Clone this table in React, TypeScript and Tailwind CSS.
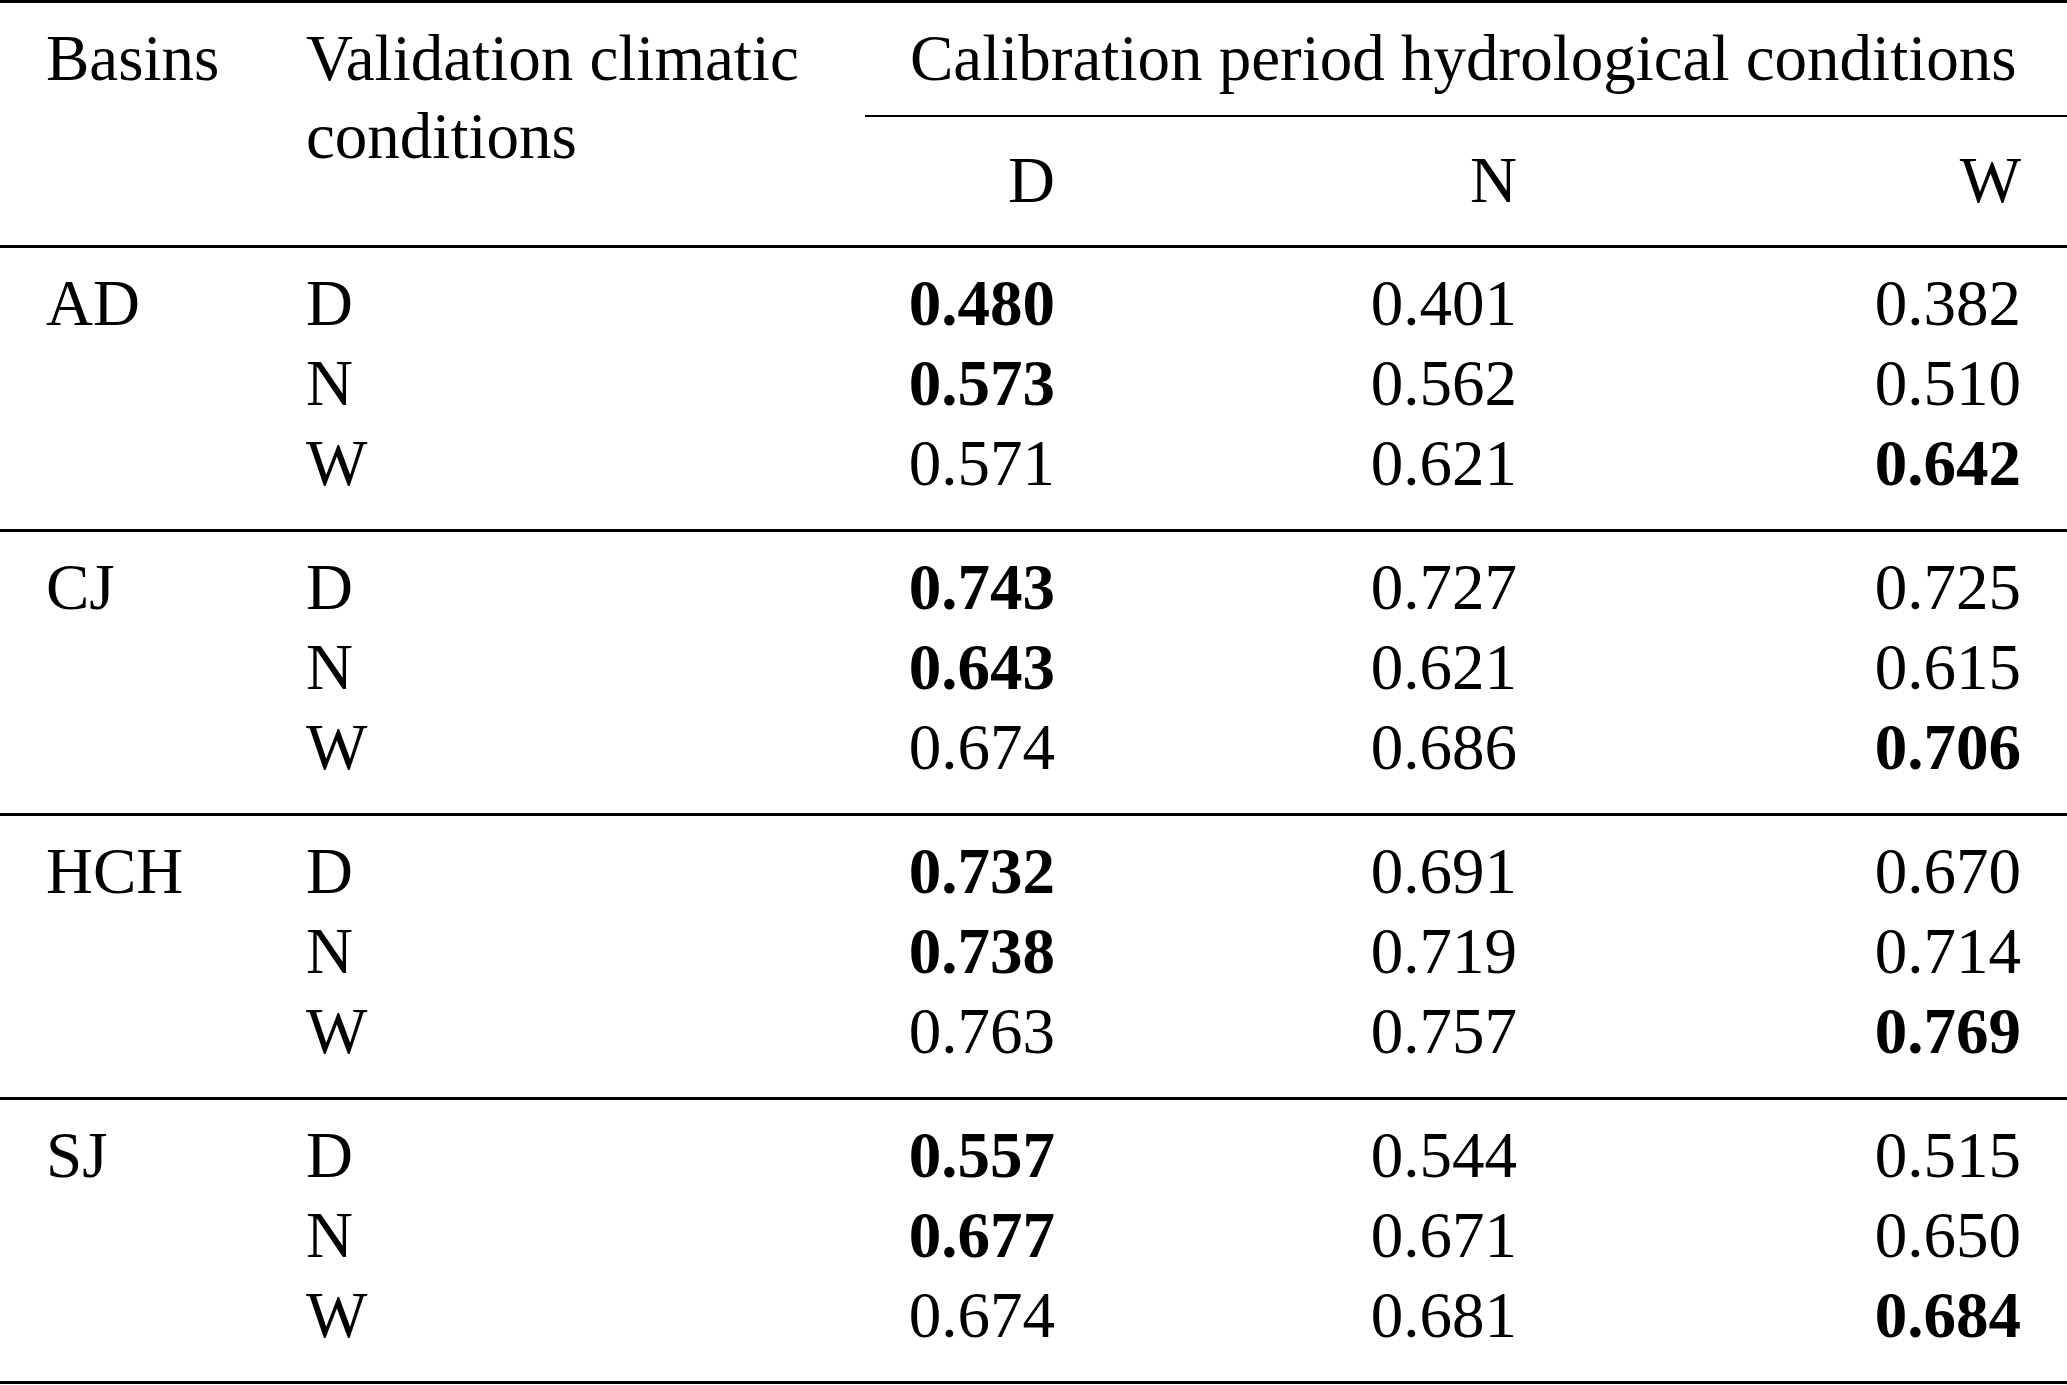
type Row = { cond: string; values: [string, string, string]; best: number }

type Group = { basin: string; rows: Row[] }

const GROUPS: Group[] = [
  {
    basin: "AD",
    rows: [
      { cond: "D", values: ["0.480", "0.401", "0.382"], best: 0 },
      { cond: "N", values: ["0.573", "0.562", "0.510"], best: 0 },
      { cond: "W", values: ["0.571", "0.621", "0.642"], best: 2 },
    ],
  },
  {
    basin: "CJ",
    rows: [
      { cond: "D", values: ["0.743", "0.727", "0.725"], best: 0 },
      { cond: "N", values: ["0.643", "0.621", "0.615"], best: 0 },
      { cond: "W", values: ["0.674", "0.686", "0.706"], best: 2 },
    ],
  },
  {
    basin: "HCH",
    rows: [
      { cond: "D", values: ["0.732", "0.691", "0.670"], best: 0 },
      { cond: "N", values: ["0.738", "0.719", "0.714"], best: 0 },
      { cond: "W", values: ["0.763", "0.757", "0.769"], best: 2 },
    ],
  },
  {
    basin: "SJ",
    rows: [
      { cond: "D", values: ["0.557", "0.544", "0.515"], best: 0 },
      { cond: "N", values: ["0.677", "0.671", "0.650"], best: 0 },
      { cond: "W", values: ["0.674", "0.681", "0.684"], best: 2 },
    ],
  },
]

function Header() {
  return (
    <div className="grid grid-cols-[260px_559px_1156px] px-[46px] pt-[16px] pb-[26px] border-b-[3px] border-black leading-[78px]">
      <div>Basins</div>
      <div>
        Validation climatic
        <br />
        conditions
      </div>
      <div className="flex flex-col">
        <div className="pl-[45px] whitespace-nowrap">Calibration period hydrological conditions</div>
        <div className="mt-[18px] h-[2px] bg-black mr-[-46px]" />
        <div className="mt-[24px] grid grid-cols-[190px_462px_504px] text-right">
          <div>D</div>
          <div>N</div>
          <div>W</div>
        </div>
      </div>
    </div>
  )
}

function BasinGroup({ group }: { group: Group }) {
  return (
    <div className="grid grid-cols-[260px_559px_190px_462px_504px] px-[46px] pt-[15px] pb-[26px] border-b-[3px] border-black leading-[80px]">
      {group.rows.map((row, i) => (
        <div key={row.cond} className="contents">
          <div>{i === 0 ? group.basin : ""}</div>
          <div>{row.cond}</div>
          {row.values.map((v, j) => (
            <div key={j} className={j === row.best ? "text-right font-bold" : "text-right"}>
              {v}
            </div>
          ))}
        </div>
      ))}
    </div>
  )
}

export default function App() {
  return (
    <div className="w-[2067px] min-h-[1385px] bg-white text-black font-['Liberation_Serif','Times_New_Roman',serif] text-[65px]">
      <div className="border-t-[3px] border-black">
        <Header />
        {GROUPS.map((g) => (
          <BasinGroup key={g.basin} group={g} />
        ))}
      </div>
    </div>
  )
}
